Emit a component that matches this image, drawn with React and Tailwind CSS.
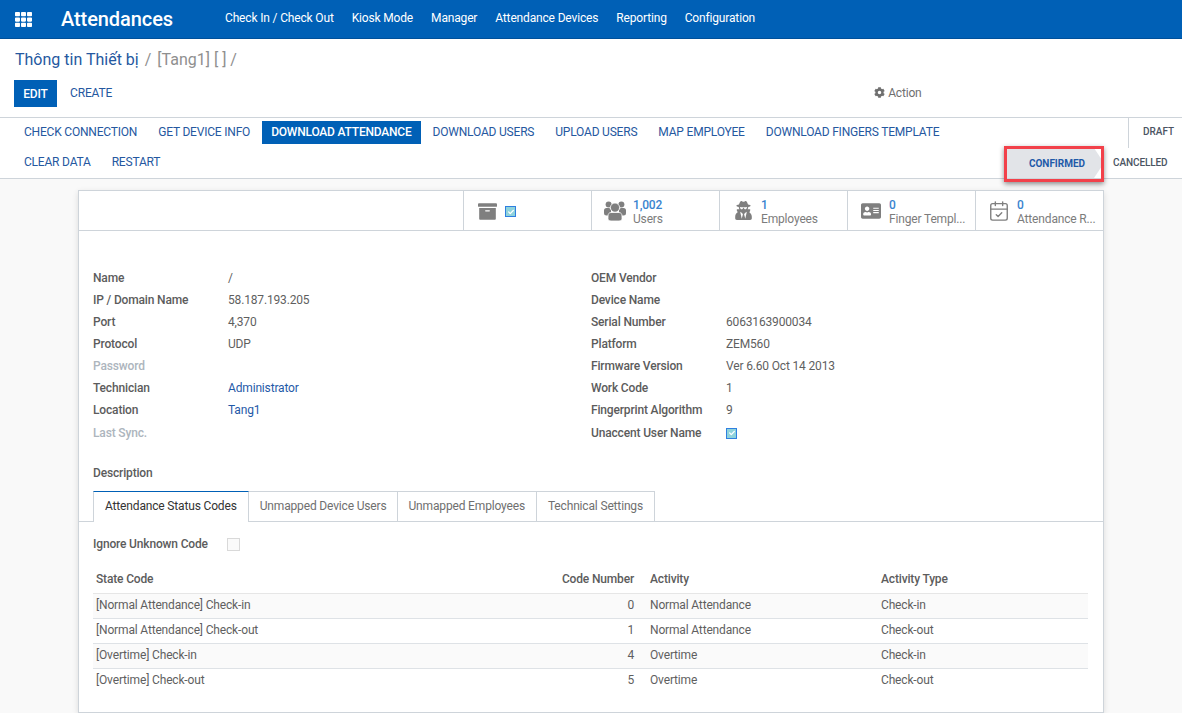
import React from 'react';
import { FaTh, FaCog, FaArchive, FaUserSecret, FaAddressCard, FaCheck } from 'react-icons/fa';
import { CalendarCheck } from 'lucide-react';

const navItems = ['Check In / Check Out', 'Kiosk Mode', 'Manager', 'Attendance Devices', 'Reporting', 'Configuration'];

const leftFields = [
  { label: 'Name', value: '/' },
  { label: 'IP / Domain Name', value: '58.187.193.205' },
  { label: 'Port', value: '4,370' },
  { label: 'Protocol', value: 'UDP' },
  { label: 'Password', muted: true },
  { label: 'Technician', value: 'Administrator', link: true },
  { label: 'Location', value: 'Tang1', link: true },
  { label: 'Last Sync.', muted: true },
];

const rightFields = [
  { label: 'OEM Vendor' },
  { label: 'Device Name' },
  { label: 'Serial Number', value: '6063163900034' },
  { label: 'Platform', value: 'ZEM560' },
  { label: 'Firmware Version', value: 'Ver 6.60 Oct 14 2013' },
  { label: 'Work Code', value: '1' },
  { label: 'Fingerprint Algorithm', value: '9' },
  { label: 'Unaccent User Name', check: true },
];

const rows = [
  ['[Normal Attendance] Check-in', '0', 'Normal Attendance', 'Check-in'],
  ['[Normal Attendance] Check-out', '1', 'Normal Attendance', 'Check-out'],
  ['[Overtime] Check-in', '4', 'Overtime', 'Check-in'],
  ['[Overtime] Check-out', '5', 'Overtime', 'Check-out'],
];

const UsersIcon = ({ className }) => (
  <svg viewBox="0 0 22 20" className={className} fill="currentColor">
    <circle cx="4.6" cy="3.4" r="3" />
    <circle cx="17.4" cy="3.4" r="3" />
    <rect x="0" y="7" width="7" height="7.5" rx="2.5" />
    <rect x="15" y="7" width="7" height="7.5" rx="2.5" />
    <circle cx="11" cy="6.6" r="4.6" stroke="white" strokeWidth="0.8" />
    <path d="M7 11.5h8c2 0 3 1.5 3 3.5v2.5c0 1.5-1 2.5-3 2.5H7c-2 0-3-1-3-2.5V15c0-2 1-3.500 3-3.500z" stroke="white" strokeWidth="0.8" />
  </svg>
);

const CalendarIcon = ({ className }) => <CalendarCheck className={className} strokeWidth={1.5} />;

const Checked = () => (
  <span className="flex h-[11px] w-[11px] items-center justify-center border border-[#2f7fe0] bg-[#8fd3dc]">
    <FaCheck className="text-[6px] text-white" />
  </span>
);

const StatButton = ({ icon: Icon, value, label, iconSize }) => (
  <div className="flex w-[128px] items-center border-l border-[#ced4da] pl-[12px]">
    <div className="mr-[7px] flex w-[22px] shrink-0 justify-center">
      <Icon className={`${iconSize} text-[#7f7f7f]`} />
    </div>
    <div className="pt-[3px] leading-[14px]">
      <div className="font-medium text-[#3a84cf]">{value}</div>
      <div className="text-[#7c7c7c]">{label}</div>
    </div>
  </div>
);

const FieldList = ({ fields, className }) => (
  <div className={className}>
    {fields.map((f) => (
      <div key={f.label} className="flex h-[22px] items-center last:h-[24px]">
        <div className={`w-[135px] shrink-0 font-medium ${f.muted ? 'text-[#adb5bd]' : 'text-[#5c5c5c]'}`}>{f.label}</div>
        {f.check ? <Checked /> : <div className={f.link ? 'text-[#1f5aa8]' : 'text-[#5f5f5f]'}>{f.value}</div>}
      </div>
    ))}
  </div>
);

export default function App() {
  return (
    <div className="flex h-[713px] flex-col overflow-hidden bg-white font-['Roboto',sans-serif] text-[12px] tracking-[-0.16px] text-[#5f5f5f]">
      {/* Navbar */}
      <header className="flex h-[39px] shrink-0 items-center border-b border-[#00509a] bg-[#0060b6] text-white">
        <FaTh className="ml-[15px] text-[17px]" />
        <span className="ml-[29px] text-[20px] font-medium leading-none tracking-[-0.08px]">Attendances</span>
        <nav className="ml-[52px] flex gap-[18px] pb-[3px]">
          {navItems.map((item) => (
            <span key={item}>{item}</span>
          ))}
        </nav>
      </header>

      {/* Control panel */}
      <div className="h-[79px] shrink-0 border-b border-[#ced4da] px-[14px]">
        <div className="flex h-[41px] items-center pl-[1px] text-[16px] tracking-normal">
          <span className="text-[#25589f]">Thông tin Thiết bị</span>
          <span className="ml-[6px] text-[#8f8f8f]">/</span>
          <span className="ml-[6px] text-[#8f8f8f]">[Tang1] [ ] /</span>
        </div>
        <div className="flex items-center">
          <button className="h-[27px] w-[43px] bg-[#0060b6] font-medium text-white">EDIT</button>
          <button className="ml-[13px] pb-[2px] text-[#25589f]">CREATE</button>
          <div className="ml-[762px] flex items-center gap-[3px] pb-[2px] text-[#6f6f6f]">
            <FaCog className="text-[11px]" />
            <span>Action</span>
          </div>
        </div>
      </div>

      {/* Status bar */}
      <div className="relative flex h-[61px] shrink-0 border-b border-[#ced4da] tracking-[-0.2px] text-[#25589f]">
        <div className="flex-1 pl-[15px]">
          <div className="flex h-[27px] items-center">
            <span className="px-[9px]">CHECK CONNECTION</span>
            <span className="ml-[3px] px-[9px]">GET DEVICE INFO</span>
            <span className="ml-[3px] mt-[2px] flex h-[23px] items-center bg-[#0060b6] px-[9px] pb-[2px] font-medium text-white">DOWNLOAD ATTENDANCE</span>
            <span className="ml-[3px] px-[9px]">DOWNLOAD USERS</span>
            <span className="ml-[3px] px-[9px]">UPLOAD USERS</span>
            <span className="ml-[3px] px-[9px]">MAP EMPLOYEE</span>
            <span className="ml-[3px] px-[9px]">DOWNLOAD FINGERS TEMPLATE</span>
          </div>
          <div className="flex h-[34px] items-center">
            <span className="px-[9px]">CLEAR DATA</span>
            <span className="ml-[3px] px-[9px]">RESTART</span>
          </div>
        </div>
        <div className="flex w-[178px] flex-col items-end text-[10px] tracking-normal text-[#4b5563]">
          <div className="flex h-[30px] w-[54px] items-center border-l border-[#ced4da] pb-[3px] pl-[14px] font-medium">DRAFT</div>
          <div className="flex h-[30px] w-full items-center">
            <div className="flex h-full w-[100px] items-center justify-center bg-[#e2e4e8] pl-[6px] font-bold text-[#1f5aa8] [clip-path:polygon(0_0,90%_0,100%_50%,90%_100%,0_100%)]">
              CONFIRMED
            </div>
            <span className="ml-[9px] pb-[2px] font-medium tracking-[-0.1px]">CANCELLED</span>
          </div>
        </div>
        {/* red annotation box */}
        <div className="absolute left-[1004px] top-[28px] h-[36px] w-[100px] border-[3px] border-[#f2414a] shadow-[0_2px_5px_rgba(0,0,0,0.45)]" />
      </div>

      {/* Content */}
      <main className="flex-1 overflow-hidden bg-[#f9f9f9] pl-[78px] pr-[78px] pt-[11px]">
        <div className="h-full border border-[#ced4da] bg-white shadow-[0_2px_6px_rgba(0,0,0,0.12)]">
          {/* Button box */}
          <div className="flex h-[40px] justify-end border-b border-[#ced4da]">
            <div className="flex w-[128px] items-center border-l border-[#ced4da] pl-[14px] pt-[2px]">
              <FaArchive className="text-[19px] text-[#7f7f7f]" />
              <span className="ml-[8px]">
                <Checked />
              </span>
            </div>
            <StatButton icon={UsersIcon} iconSize="h-[20px] w-[22px]" value="1,002" label="Users" />
            <StatButton icon={FaUserSecret} iconSize="text-[19px]" value="1" label="Employees" />
            <StatButton icon={FaAddressCard} iconSize="text-[20px] shrink-0" value="0" label="Finger Templ..." />
            <StatButton icon={CalendarIcon} iconSize="h-[22px] w-[22px] shrink-0" value="0" label="Attendance R..." />
          </div>

          {/* Form */}
          <div className="flex pl-[14px] pt-[36px]">
            <FieldList fields={leftFields} className="w-[498px]" />
            <FieldList fields={rightFields} className="flex-1" />
          </div>

          <div className="ml-[14px] mt-[19px] font-medium text-[#5c5c5c]">Description</div>

          {/* Tabs */}
          <div className="mt-[9px] flex h-[31px] border-b border-[#ced4da] pl-[14px]">
            <div className="flex h-[31px] items-center border-x border-t border-x-[#ced4da] border-t-[#0060b6] bg-white px-[11px] pb-[3px] text-[#333333]">Attendance Status Codes</div>
            <div className="flex h-[30px] items-center border-r border-t border-[#ced4da] pb-[2px] pl-[11px] pr-[10px] text-[#6f6f6f]">Unmapped Device Users</div>
            <div className="flex h-[30px] items-center border-r border-t border-[#ced4da] px-[11px] pb-[2px] text-[#6f6f6f]">Unmapped Employees</div>
            <div className="flex h-[30px] items-center border-r border-t border-[#ced4da] px-[11px] pb-[2px] text-[#6f6f6f]">Technical Settings</div>
          </div>

          <div className="flex items-center pl-[14px] pt-[13px]">
            <span className="w-[134px] font-medium text-[#5c5c5c]">Ignore Unknown Code</span>
            <span className="h-[13px] w-[13px] border border-[#d9d9d9] bg-[#fafafa]" />
          </div>

          {/* Table */}
          <table className="ml-[14px] mt-[12px] w-[995px] table-fixed border-collapse">
            <thead>
              <tr className="h-[28px] border-b border-[#e6e6e6] text-left font-medium text-[#5c5c5c]">
                <th className="w-[457px] pl-[3px] font-medium">State Code</th>
                <th className="w-[87px] pr-[3px] text-right font-medium">Code Number</th>
                <th className="w-[231px] pl-[13px] font-medium">Activity</th>
                <th className="pl-[13px] font-medium">Activity Type</th>
              </tr>
            </thead>
            <tbody>
              {rows.map((r, i) => (
                <tr key={r[0]} className={`h-[25px] border-b border-[#dee2e6] last:border-b-0 [&>td]:pb-[2px] ${i % 2 === 0 ? 'bg-[#fafafa]' : 'bg-white'}`}>
                  <td className="pl-[3px]">{r[0]}</td>
                  <td className="pr-[3px] text-right">{r[1]}</td>
                  <td className="pl-[13px]">{r[2]}</td>
                  <td className="pl-[13px]">{r[3]}</td>
                </tr>
              ))}
            </tbody>
          </table>
        </div>
      </main>
    </div>
  );
}
